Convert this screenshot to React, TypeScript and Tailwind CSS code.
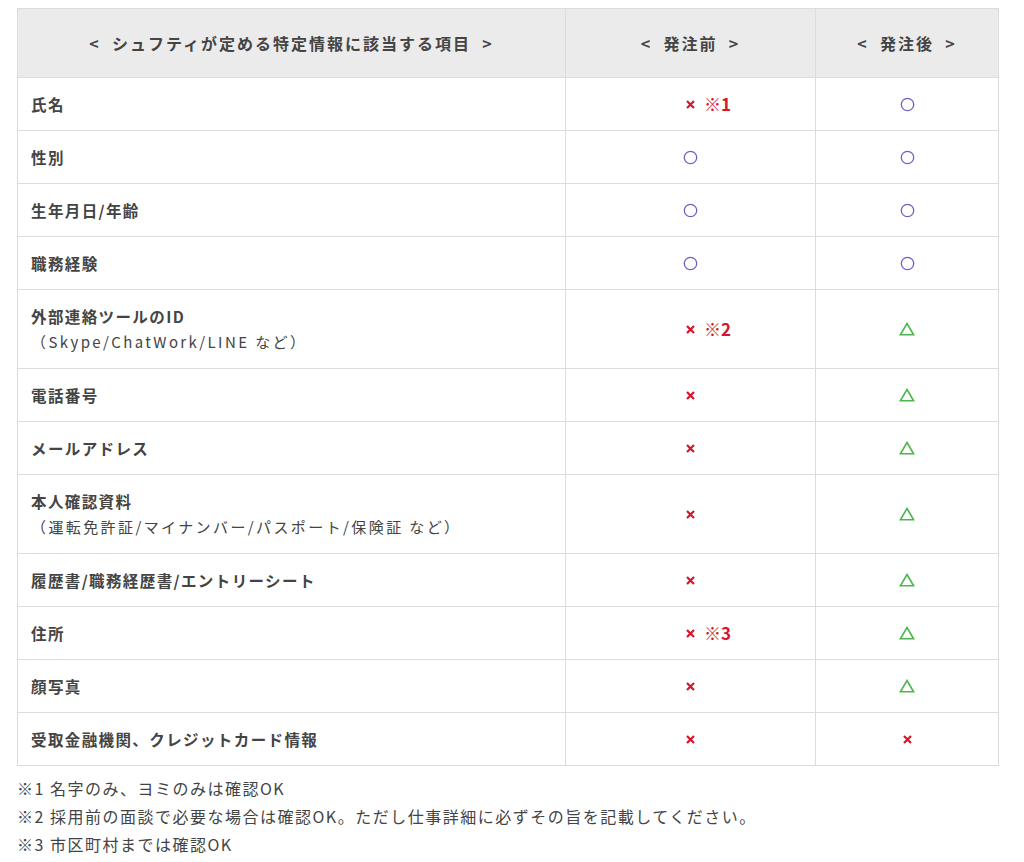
import React from "react";

type Mark = "o" | "x" | "t";
type Row = { label: string; sub?: string; before: Mark; note?: string; after: Mark };

const rows: Row[] = [
  { label: "氏名", before: "x", note: "1", after: "o" },
  { label: "性別", before: "o", after: "o" },
  { label: "生年月日/年齢", before: "o", after: "o" },
  { label: "職務経験", before: "o", after: "o" },
  { label: "外部連絡ツールのID", sub: "（Skype/ChatWork/LINE など）", before: "x", note: "2", after: "t" },
  { label: "電話番号", before: "x", after: "t" },
  { label: "メールアドレス", before: "x", after: "t" },
  { label: "本人確認資料", sub: "（運転免許証/マイナンバー/パスポート/保険証 など）", before: "x", after: "t" },
  { label: "履歴書/職務経歴書/エントリーシート", before: "x", after: "t" },
  { label: "住所", before: "x", note: "3", after: "t" },
  { label: "顔写真", before: "x", after: "t" },
  { label: "受取金融機関、クレジットカード情報", before: "x", after: "x" },
];

function Circle() {
  return (
    <svg width="15" height="15" viewBox="0 0 15 15" className="block">
      <circle cx="7.5" cy="7.5" r="6.2" fill="none" stroke="#6a62c6" strokeWidth="1.3" />
    </svg>
  );
}

function Triangle() {
  return (
    <svg width="16" height="14" viewBox="0 0 16 14" className="block">
      <polygon points="8,1.5 14.6,12.8 1.4,12.8" fill="none" stroke="#4db64d" strokeWidth="1.6" strokeLinejoin="miter" />
    </svg>
  );
}

function Cross() {
  return (
    <svg width="9" height="9" viewBox="0 0 9 9" className="block">
      <path d="M1 1 L8 8 M8 1 L1 8" stroke="#d8152b" strokeWidth="2.2" strokeLinecap="butt" />
    </svg>
  );
}

function MarkIcon({ m }: { m: Mark }) {
  if (m === "o") return <Circle />;
  if (m === "t") return <Triangle />;
  return <Cross />;
}

function MarkCell({ m, note }: { m: Mark; note?: string }) {
  return (
    <div className="grid grid-cols-[1fr_auto_1fr] items-center">
      <div />
      <MarkIcon m={m} />
      <div className="flex items-center">
        {note && (
          <span className="ml-[9px] font-bold text-[17px] leading-[26px] text-[#d8152b]">
            <span className="font-normal text-[17px]">※</span>
            {note}
          </span>
        )}
      </div>
    </div>
  );
}

const thCls =
  "border border-[#dcdcdc] py-[21px] text-center font-bold text-[16px] leading-[26px] tracking-[2px] whitespace-pre";

export default function App() {
  const font = { fontFamily: '"Noto Sans CJK JP", "Noto Sans", sans-serif' };
  return (
    <div className="bg-white w-[1024px] min-h-[862px] pt-[8px] pl-[17px] text-[#444]" style={font}>
      <table className="table-fixed border-collapse w-[981px]">
        <colgroup>
          <col className="w-[548px]" />
          <col className="w-[250px]" />
          <col className="w-[183px]" />
        </colgroup>
        <thead>
          <tr className="bg-[#ebebeb]">
            <th className={thCls}>{"<  シュフティが定める特定情報に該当する項目  >"}</th>
            <th className={thCls}>{"<  発注前  >"}</th>
            <th className={thCls}>{"<  発注後  >"}</th>
          </tr>
        </thead>
        <tbody>
          {rows.map((r) => (
            <tr key={r.label}>
              <td className="border border-[#dcdcdc] py-[13px] pl-[13px] pr-2 align-middle">
                <div className="font-bold text-[15.5px] leading-[26px] tracking-[0.09em]">{r.label}</div>
                {r.sub && (
                  <div className="text-[15px] leading-[26px] tracking-[2.4px]">{r.sub}</div>
                )}
              </td>
              <td className="border border-[#dcdcdc] py-[13px] align-middle">
                <MarkCell m={r.before} note={r.note} />
              </td>
              <td className="border border-[#dcdcdc] py-[13px] align-middle">
                <MarkCell m={r.after} />
              </td>
            </tr>
          ))}
        </tbody>
      </table>
      <div className="mt-[8px] text-[16px] leading-[28px] tracking-[1.5px] text-[#444]">
        <p>※1 名字のみ、ヨミのみは確認OK</p>
        <p>※2 採用前の面談で必要な場合は確認OK。ただし仕事詳細に必ずその旨を記載してください。</p>
        <p>※3 市区町村までは確認OK</p>
      </div>
    </div>
  );
}
